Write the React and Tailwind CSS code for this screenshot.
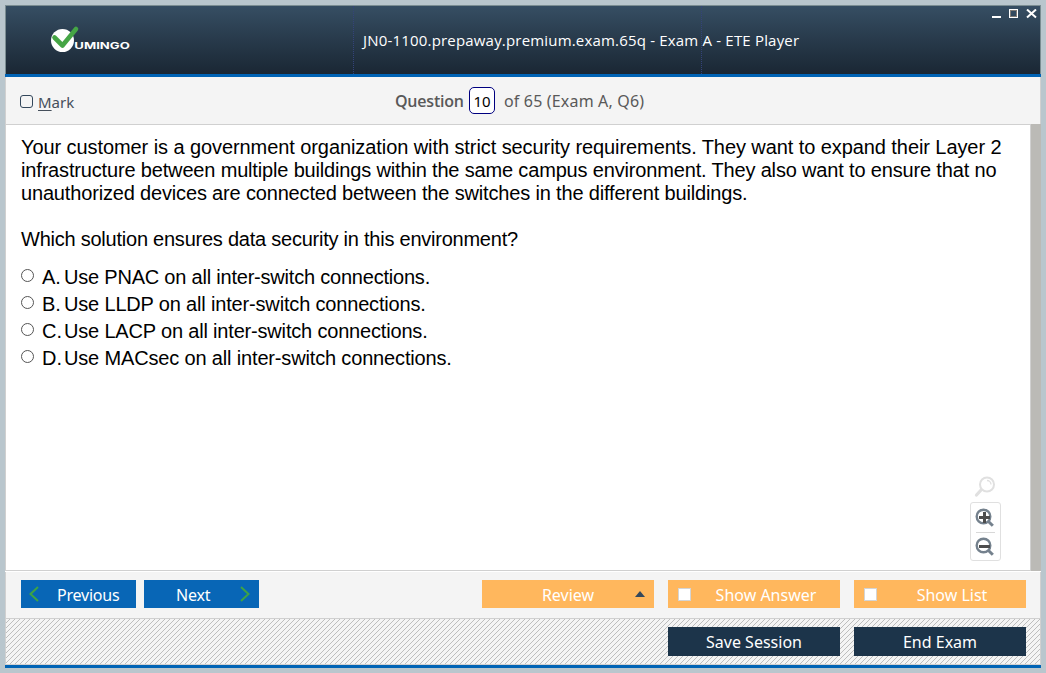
import React from "react";

const options = [
  ["A.", "Use PNAC on all inter-switch connections.", "tracking-[-0.21px]"],
  ["B.", "Use LLDP on all inter-switch connections.", "tracking-[-0.17px]"],
  ["C.", "Use LACP on all inter-switch connections.", "tracking-[-0.18px]"],
  ["D.", "Use MACsec on all inter-switch connections.", "tracking-[-0.16px]"],
];

function Logo() {
  return (
    <svg width="84" height="32" viewBox="0 0 84 32" className="shrink-0">
      <circle cx="12.5" cy="15.5" r="11.5" fill="#fff" />
      <path d="M4.5 12.5 L12.5 20.5 L26 4" fill="none" stroke="#45a545" strokeWidth="4.6" strokeLinecap="round" strokeLinejoin="round" />
      <text x="24.300" y="24" fill="#fff" fontFamily="Inter, sans-serif" fontWeight="700" fontSize="9.4" textLength="55.5" lengthAdjust="spacingAndGlyphs">UMINGO</text>
    </svg>
  );
}

function Magnifier({ plus }) {
  return (
    <svg width="20" height="20" viewBox="0 0 20 20" className="block">
      <path d="M12.5 12.5 L17.8 17.8" stroke="#74818d" strokeWidth="3" />
      <circle cx="8.5" cy="8.5" r="6.8" fill="#fff" stroke="#74818d" strokeWidth="2.4" />
      <path d="M4 9.5H15" stroke="#4d4d4d" strokeWidth="3" />
      {plus && <path d="M9.500 4V15" stroke="#4d4d4d" strokeWidth="3" />}
    </svg>
  );
}

function CheckButton({ children }) {
  return (
    <button className="flex h-7 w-[172px] items-center bg-[#ffb75d] pl-[10px] text-white">
      <span className="size-[13px] shrink-0 border border-[#d4d4d4] bg-white" />
      <span className="flex-1 pl-[1px] pt-[2px] text-center">{children}</span>
    </button>
  );
}

export default function App() {
  return (
    <div className="h-[673px] w-[1046px] overflow-hidden bg-[#b9c6cd] p-[5px] font-['Noto_Sans',sans-serif]">
      <div className="flex h-[663px] w-[1036px] flex-col bg-white">
        <header className="flex h-[69px] shrink-0 border border-b-0 border-[#7b8d92] bg-linear-to-b from-[#364e63] to-[#1a2734] text-white">
          <div className="flex w-[347px] items-start pl-[44px] pt-[19px]">
            <Logo />
          </div>
          <div className="flex w-[348px] items-center border-l border-dotted border-[#34437a] pl-[9px]">
            <h1 className="whitespace-nowrap font-['Open_Sans',sans-serif] text-[15px] font-medium tracking-[0.185px]">JN0-1100.prepaway.premium.exam.65q - Exam A - ETE Player</h1>
          </div>
          <div className="flex flex-1 justify-end border-l border-dotted border-[#34437a] pr-[2px] pt-[3px]">
            <svg width="46" height="10" viewBox="0 0 46 10" shapeRendering="crispEdges">
              <path d="M0 7H9V9H0z" fill="#fff" />
              <path d="M17.5.5H25.5V8.5H17.5z" fill="none" stroke="#fff" />
              <path d="M18.5 1.5H24.5V7.5H18.5z" fill="none" stroke="#817b75" />
              <path d="M35 .5L44 8.5M44 .5L35 8.5" stroke="#fff" strokeWidth="2" shapeRendering="auto" />
            </svg>
          </div>
        </header>
        <div className="h-[3px] shrink-0 bg-[#0063b5]" />
        <div className="flex h-[48px] shrink-0 items-center border-x border-b border-[#d0d0d0] bg-[#f4f4f4] text-[#595959]">
          <label className="flex w-[389px] items-center pl-[14px] text-[#454f5b]">
            <span className="mt-[2px] size-[13px] rounded-[3px] border border-[#33475b]" />
            <span className="pl-[5px] pt-[3px] text-[15px] leading-5"><span className="underline underline-offset-2">M</span>ark</span>
          </label>
          <span className="w-[74px] whitespace-nowrap font-['Open_Sans',sans-serif] text-[16px] font-semibold tracking-[-0.22px]">Question</span>
          <span className="flex h-[27px] w-[26px] items-center justify-center rounded-[5px] border border-[#000080] bg-white pt-px text-[15px] text-black">10</span>
          <span className="whitespace-nowrap pl-[9px] text-[16px] tracking-[0.17px]">of 65 (Exam A, Q6)</span>
        </div>
        <main className="flex h-[446px] shrink-0">
          <div className="flex w-[1026px] flex-col border-b border-l border-r border-[#d0d0d0] pl-[15px] pt-[11px] font-['Liberation_Sans',Arial,sans-serif] text-[20px] leading-[23px] text-black">
            <p className="whitespace-nowrap tracking-[-0.08px]">Your customer is a government organization with strict security requirements. They want to expand their Layer 2</p>
            <p className="whitespace-nowrap tracking-[-0.165px]">infrastructure between multiple buildings within the same campus environment. They also want to ensure that no</p>
            <p className="whitespace-nowrap tracking-[-0.165px]">unauthorized devices are connected between the switches in the different buildings.</p>
            <p className="mt-[23px] whitespace-nowrap tracking-[-0.235px]">Which solution ensures data security in this environment?</p>
            <div className="mt-[13px]">
              {options.map(([letter, text, spacing]) => (
                <label key={letter} className="flex h-[27px] items-center">
                  <span className="-mt-[4px] size-[13px] rounded-full border border-[#555]" />
                  <span className="w-[22px] pl-[8px]">{letter}</span>
                  <span className={"whitespace-nowrap pl-[8px] " + spacing}>{text}</span>
                </label>
              ))}
            </div>
            <div className="mt-auto mb-[9px] mr-[29px] flex flex-col items-center self-end">
              <svg width="22" height="22" viewBox="0 0 22 22" className="mb-[4px] mr-[2px]">
                <path d="M2.500 19L8 13" stroke="#e0e0e0" strokeWidth="3.2" strokeLinecap="round" />
                <circle cx="13" cy="8.5" r="7" fill="#fff" stroke="#e0e0e0" strokeWidth="2" />
                <path d="M13 4.5A4 4 0 0 1 17 8.5" fill="none" stroke="#e0e0e0" strokeWidth="1.3" />
              </svg>
              <div className="flex h-[59px] w-[31px] flex-col items-center rounded-[3px] border border-[#e0e0e0] bg-white pr-px pt-[5px]">
                <Magnifier plus />
                <span className="my-[4px] h-px w-[19px] bg-[#d8d8d8]" />
                <Magnifier />
              </div>
            </div>
          </div>
          <div className="-mt-px w-[10px] bg-[#bbbab6]" />
        </main>
        <div className="mt-px flex h-[47px] shrink-0 items-start border-x border-b border-[#d0d0d0] bg-[#f4f4f4] pl-[15px] pr-[14px] pt-[8px] text-[16px] leading-6">
          <button className="flex h-7 w-[115px] items-center bg-[#0866b6] text-white">
            <svg width="10" height="16" viewBox="0 0 10 16" className="ml-[8px]"><path d="M9 1L1.5 8L9 15" fill="none" stroke="#3ea345" strokeWidth="2" /></svg>
            <span className="pl-[18px] pt-[2px] tracking-[-0.22px]">Previous</span>
          </button>
          <button className="ml-2 flex h-7 w-[115px] items-center bg-[#0866b6] text-white">
            <span className="w-[96px] pl-[32px] pt-[2px] text-left tracking-[-0.2px]">Next</span>
            <svg width="10" height="16" viewBox="0 0 10 16"><path d="M1 1L8.500 8L1 15" fill="none" stroke="#3ea345" strokeWidth="2" /></svg>
          </button>
          <button className="ml-auto flex h-7 w-[172px] items-center bg-[#ffb75d] text-white">
            <span className="w-full pt-[2px] text-center">Review</span>
            <svg width="10" height="6" viewBox="0 0 10 6" className="-ml-[19px] mr-[9px] shrink-0"><path d="M0 6L5 0L10 6z" fill="#33475b" /></svg>
          </button>
          <div className="ml-[14px] flex gap-[14px]">
            <CheckButton>Show Answer</CheckButton>
            <CheckButton>Show List</CheckButton>
          </div>
        </div>
        <div className="flex h-[46px] shrink-0 items-start justify-end gap-[14px] border-x border-b border-[#d0d0d0] bg-[#f4f4f4] bg-[linear-gradient(135deg,transparent_45%,#bdbdbd_45%,#bdbdbd_55%,transparent_55%)] bg-[size:5px_5px] bg-[position:-1px_0px] pr-[14px] pt-[8px] text-[16px] text-white">
          <button className="h-[29px] w-[172px] bg-[#1c344a]">Save Session</button>
          <button className="h-[29px] w-[172px] bg-[#1c344a]">End Exam</button>
        </div>
        <div className="h-[3px] shrink-0 bg-[#0063b5]" />
      </div>
    </div>
  );
}
